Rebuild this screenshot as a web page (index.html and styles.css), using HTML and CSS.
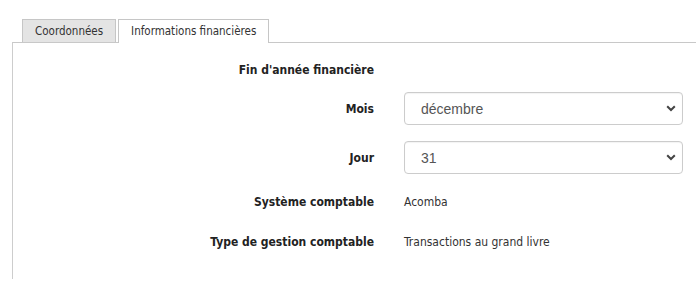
FILE: index.html
```html
<!DOCTYPE html>
<html lang="fr">
<head>
  <meta charset="UTF-8">
  <meta name="viewport" content="width=device-width, initial-scale=1.0">
  <title>Informations financières</title>
  <link rel="stylesheet" href="styles.css">
</head>
<body>

  <!-- Tabs -->
  <ul class="tabs">
    <li class="tab">Coordonnées</li>
    <li class="tab active">Informations financières</li>
  </ul>

  <div class="panel">
    <div class="form">
      <div class="label section-title">Fin d'année financière</div>
      <div></div>

      <label class="label" for="mois">Mois</label>
      <div class="select-wrap">
        <select id="mois" class="select">
          <option>décembre</option>
        </select>
        <svg class="chevron" width="10" height="7" viewBox="0 0 10 7">
          <path d="M1.2 1.2 L5 5 L8.8 1.2" fill="none" stroke="#444" stroke-width="2"/>
        </svg>
      </div>

      <label class="label" for="jour">Jour</label>
      <div class="select-wrap">
        <select id="jour" class="select">
          <option>31</option>
        </select>
        <svg class="chevron" width="10" height="7" viewBox="0 0 10 7">
          <path d="M1.2 1.2 L5 5 L8.8 1.2" fill="none" stroke="#444" stroke-width="2"/>
        </svg>
      </div>

      <div class="label text-row">Système comptable</div>
      <div class="value text-row">Acomba</div>

      <div class="label text-row">Type de gestion comptable</div>
      <div class="value text-row">Transactions au grand livre</div>
    </div>
  </div>

</body>
</html>
```

FILE: styles.css
```css
body {
  margin: 0;
  font-family: "DejaVu Sans Condensed", "Liberation Sans", Arial, sans-serif;
  color: #333;
  background-color: #fff;
}

.tabs {
  list-style: none;
  margin: 0;
  padding: 19px 0 0 22px;
  display: flex;
  gap: 2px;
}

.tab {
  border: 1px solid #c6c6c6;
  border-bottom: none;
  background-color: #e4e4e4;
  font-size: 11.5px;
  line-height: 22px;
  padding: 0 12px;
  color: #333;
}

.tab.active {
  background-color: #fff;
  margin-bottom: -1px;
  line-height: 23px;
  position: relative;
}

.panel {
  margin-left: 12px;
  border-top: 1px solid #c8c8c8;
  border-left: 1px solid #cdcdcd;
  height: 236px;
}

.form {
  display: grid;
  grid-template-columns: 361px 279px;
  column-gap: 30px;
  row-gap: 16px;
  align-items: center;
  padding-top: 19px;
}

.label {
  text-align: right;
  font-weight: bold;
  font-size: 12px;
  color: #222;
}

.section-title {
  line-height: 16px;
  margin-bottom: -2px;
}

.text-row {
  line-height: 24px;
}

.value {
  font-size: 12px;
  color: #333;
}

.select-wrap {
  position: relative;
}

.select {
  appearance: none;
  -webkit-appearance: none;
  width: 100%;
  height: 33px;
  border: 1px solid #ccc;
  border-radius: 4px;
  background-color: #fff;
  box-shadow: inset 0 1px 1px rgba(0, 0, 0, 0.05);
  padding: 0 16px;
  font-family: "Liberation Sans", Arial, sans-serif;
  font-size: 14px;
  color: #555;
  margin: 0;
}

.chevron {
  position: absolute;
  right: 7px;
  top: 13px;
  pointer-events: none;
}
```
